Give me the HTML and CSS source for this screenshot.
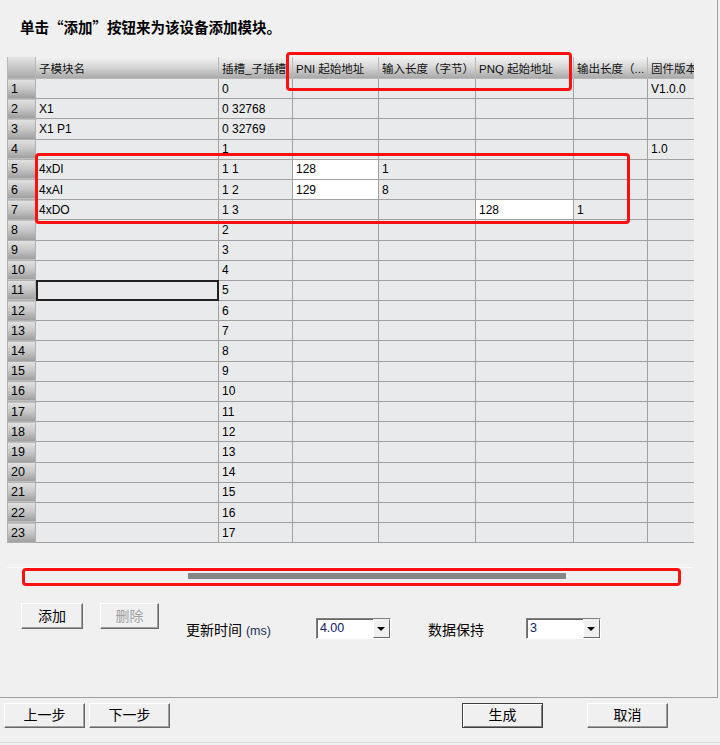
FILE: index.html
```html
<!DOCTYPE html>
<html lang="zh-CN">
<head>
    <meta charset="UTF-8">
    <title>添加模块</title>
    <link rel="stylesheet" href="styles.css">
</head>
<body>
    <div class="panel">
        <h1 class="title">单击“添加”按钮来为该设备添加模块。</h1>

        <div class="grid-wrap">
            <table class="grid">
                <colgroup>
                    <col style="width:28px">
                    <col style="width:183px">
                    <col style="width:74px">
                    <col style="width:86px">
                    <col style="width:97px">
                    <col style="width:98px">
                    <col style="width:74px">
                    <col style="width:46px">
                </colgroup>
                <thead>
                    <tr>
                        <th class="corner"></th>
                        <th>子模块名</th>
                        <th>插槽_子插槽</th>
                        <th>PNI 起始地址</th>
                        <th>输入长度（字节）</th>
                        <th>PNQ 起始地址</th>
                        <th>输出长度（...</th>
                        <th>固件版本</th>
                    </tr>
                </thead>
                <tbody id="rows"></tbody>
            </table>
            <div class="mark mark-head"></div>
            <div class="mark mark-rows"></div>
        </div>

        <div class="hscroll">
            <div class="hscroll-thumb"></div>
            <div class="mark mark-scroll"></div>
        </div>

        <div class="controls">
            <button class="btn btn-small">添加</button>
            <button class="btn btn-small" disabled>删除</button>
            <span class="label label-time">更新时间 <small>(ms)</small></span>
            <div class="combo">
                <span class="combo-text">4.00</span>
                <span class="combo-btn"><i class="arrow"></i></span>
            </div>
            <span class="label label-keep">数据保持</span>
            <div class="combo">
                <span class="combo-text">3</span>
                <span class="combo-btn"><i class="arrow"></i></span>
            </div>
        </div>
    </div>

    <div class="footer">
        <button class="btn btn-wide">上一步</button>
        <button class="btn btn-wide">下一步</button>
        <span class="spacer"></span>
        <button class="btn btn-wide btn-default">生成</button>
        <button class="btn btn-wide btn-cancel">取消</button>
    </div>

    <script>
        // 子模块数据：名称, 插槽, PNI, 输入长度, PNQ, 输出长度, 固件版本
        const modules = [
            ['', '0', '', '', '', '', 'V1.0.0'],
            ['X1', '0 32768', '', '', '', '', ''],
            ['X1 P1', '0 32769', '', '', '', '', ''],
            ['', '1', '', '', '', '', '1.0'],
            ['4xDI', '1 1', '128', '1', '', '', ''],
            ['4xAI', '1 2', '129', '8', '', '', ''],
            ['4xDO', '1 3', '', '', '128', '1', '']
        ];
        for (let i = 2; i <= 17; i++) {
            modules.push(['', String(i), '', '', '', '', '']);
        }

        const tbody = document.getElementById('rows');
        modules.forEach((m, idx) => {
            const tr = document.createElement('tr');
            let html = `<td class="rowhead">${idx + 1}</td>`;
            m.forEach((v, c) => {
                let cls = '';
                if (v && (c === 2 || c === 4)) cls = 'edit';
                if (idx === 10 && c === 0) cls = 'focus';
                html += `<td class="${cls}">${v}</td>`;
            });
            tr.innerHTML = html;
            tbody.appendChild(tr);
        });
    </script>
</body>
</html>
```

FILE: styles.css
```css
body {
    margin: 0;
    width: 720px;
    height: 745px;
    background-color: #f0f0f0;
    font-family: 'Liberation Sans', 'Noto Sans CJK SC', sans-serif;
    color: #000;
    overflow: hidden;
}

.panel {
    width: 710px;
    height: 697px;
    padding-left: 7px;
    border-right: 1px solid #a0a0a0;
    border-bottom: 1px solid #a0a0a0;
}

.title {
    margin: 0;
    padding: 17px 0 0 13px;
    font-family: 'Noto Sans CJK SC', sans-serif;
    font-size: 14.5px;
    line-height: 20px;
    font-weight: bold;
    height: 40px;
}

.grid-wrap {
    position: relative;
    width: 686px;
}

.grid {
    table-layout: fixed;
    border-collapse: collapse;
    width: 686px;
    font-size: 12px;
}

.grid th,
.grid td {
    border: 1px solid #a0a0a0;
    padding: 0 0 0 3px;
    text-align: left;
    white-space: nowrap;
    overflow: hidden;
    font-weight: normal;
}

.grid th {
    height: 21px;
    font-size: 11.5px;
    color: #111;
    background: linear-gradient(#f2f2f2, #d8d8d8 45%, #a9a9a9);
    border-color: #b8b8b8;
    border-top: none;
}

.grid th:last-child,
.grid td:last-child {
    border-right: none;
}

.grid td {
    height: 19.2px;
    background-color: #e9eaec;
}

.grid .corner {
    background: linear-gradient(#e4e4e4, #a8a8a8);
}

.grid .rowhead {
    padding-left: 3px;
    font-size: 12.5px;
    background: linear-gradient(#e2e2e2, #c6c6c6 50%, #9c9c9c);
    border-color: #b0b0b0;
}

.grid td.edit {
    background-color: #fff;
}

.grid td.focus {
    outline: 2px solid #222;
    outline-offset: -2px;
}

.mark {
    position: absolute;
    border: 3px solid #ff1010;
    border-radius: 4px;
    pointer-events: none;
}

.mark-head {
    left: 279px;
    top: -5px;
    width: 280px;
    height: 33px;
}

.mark-rows {
    left: 28px;
    top: 96px;
    width: 589px;
    height: 65px;
}

.hscroll {
    position: relative;
    width: 686px;
    height: 20px;
    margin-top: 24px;
    border-top: 1px solid #fbfbfb;
}

.hscroll-thumb {
    margin: 5px 0 0 181px;
    width: 378px;
    height: 6px;
    background-color: #878787;
}

.mark-scroll {
    left: 15px;
    top: 0;
    width: 653px;
    height: 12px;
}

.controls {
    display: flex;
    align-items: flex-start;
    margin-top: 15px;
    padding-left: 14px;
}

.btn {
    box-sizing: border-box;
    height: 26px;
    padding: 0 0 3px;
    font-family: 'Liberation Sans', 'Noto Sans CJK SC', sans-serif;
    font-size: 14px;
    color: #000;
    background-color: #f0f0f0;
    border: 1px solid;
    border-color: #fff #696969 #696969 #fff;
    box-shadow: inset -1px -1px #a0a0a0;
}

.btn:disabled {
    color: #a0a0a0;
}

.btn-small {
    width: 62px;
    margin-right: 17px;
}

.btn-small:disabled {
    width: 59px;
}

.label {
    font-size: 14px;
    line-height: 20px;
    margin-top: 17px;
}

.label small {
    font-size: 12.5px;
    color: #25305a;
}

.label-time {
    margin-left: 10px;
    margin-right: 45px;
}

.label-keep {
    margin-left: 37px;
    margin-right: 42px;
}

.combo {
    box-sizing: border-box;
    display: flex;
    width: 75px;
    height: 21px;
    margin-top: 15px;
    background-color: #fff;
    border: 1px solid;
    border-color: #808080 #fff #fff #808080;
    box-shadow: inset 1px 1px #696969;
}

.combo-text {
    flex: 1;
    padding: 2px 0 0 3px;
    font-size: 12.5px;
    line-height: 15px;
    color: #10206a;
}

.combo-btn {
    box-sizing: border-box;
    display: flex;
    align-items: center;
    justify-content: center;
    width: 17px;
    height: 19px;
    background-color: #f0f0f0;
    border: 1px solid;
    border-color: #f0f0f0 #696969 #696969 #fff;
}

.arrow {
    width: 0;
    height: 0;
    border-left: 4px solid transparent;
    border-right: 4px solid transparent;
    border-top: 4px solid #000;
}

.footer {
    display: flex;
    box-sizing: border-box;
    height: 45px;
    padding: 5px 0 0 4px;
    border-bottom: 1px solid #d8d8d8;
}

.btn-wide {
    width: 81px;
    height: 25px;
    margin-right: 4px;
}

.spacer {
    width: 288px;
}

.btn-default {
    border: 1px solid #404040;
    box-shadow: inset 1px 1px #fff, inset -1px -1px #808080;
    margin-right: 44px;
}
```
